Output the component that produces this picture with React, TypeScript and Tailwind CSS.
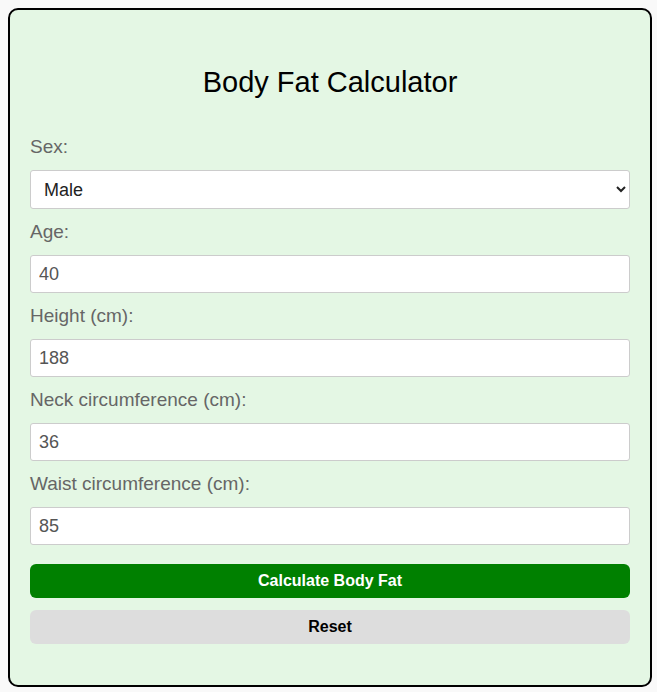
import React, { useState } from 'react';

const fields = [
  { key: 'age', label: 'Age:', value: '40' },
  { key: 'height', label: 'Height (cm):', value: '188' },
  { key: 'neck', label: 'Neck circumference (cm):', value: '36' },
  { key: 'waist', label: 'Waist circumference (cm):', value: '85' },
];

const App: React.FC = () => {
  const [sex, setSex] = useState('male');
  const [values, setValues] = useState<Record<string, string>>(
    Object.fromEntries(fields.map(f => [f.key, f.value]))
  );

  return (
    <div className="min-h-[692px] bg-[#f9f9f9] p-2 font-['Liberation_Sans',Arial,sans-serif]">
      <div className="h-[679px] w-[644px] rounded-[10px] border-2 border-black bg-[#e4f7e4] px-5 pt-[55px]">
        <h1 className="text-center text-[29px] leading-[34px] text-black">Body Fat Calculator</h1>
        <div className="mt-[37px] flex flex-col">
          <label className="mb-3 text-[19px] leading-[22px] text-[#666]">Sex:</label>
          <select
            className="mb-3 h-[39px] w-full rounded-[3px] border border-[#ccc] bg-white px-[9px] text-[18px] text-[#222]"
            value={sex}
            onChange={e => setSex(e.target.value)}
          >
            <option value="male">Male</option>
            <option value="female">Female</option>
          </select>
          {fields.map(f => (
            <React.Fragment key={f.key}>
              <label className="mb-3 text-[19px] leading-[22px] text-[#666]">{f.label}</label>
              <input
                className="mb-3 h-[38px] w-full rounded-[3px] border border-[#ccc] bg-white px-2 text-[18px] text-[#555] outline-none"
                value={values[f.key]}
                onChange={e => setValues({ ...values, [f.key]: e.target.value })}
              />
            </React.Fragment>
          ))}
          <button className="mt-[7px] h-[34px] w-full rounded-[6px] bg-[#008000] text-[16px] font-bold text-white">
            Calculate Body Fat
          </button>
          <button className="mt-3 h-[34px] w-full rounded-[6px] bg-[#ddd] text-[16px] font-bold text-black">
            Reset
          </button>
        </div>
      </div>
    </div>
  );
};

export default App;
